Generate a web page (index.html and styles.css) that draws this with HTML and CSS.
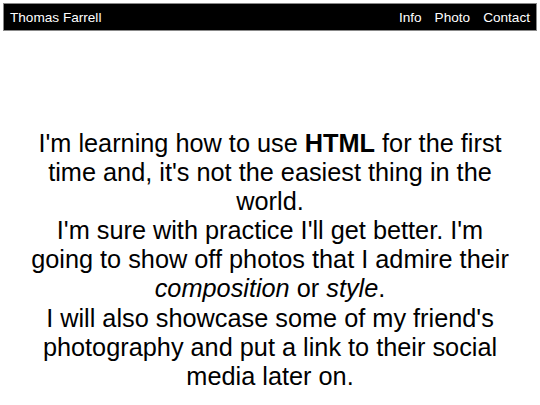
FILE: index.html
```html
<!DOCTYPE html>
<html>
<head>
<meta charset="utf-8">
<title>Thomas Farrell</title>
<link rel="stylesheet" href="styles.css">
</head>
<body>
<nav class="nav">
  <span class="brand">Thomas Farrell</span>
  <ul class="links">
    <li><a href="#">Info</a></li>
    <li><a href="#">Photo</a></li>
    <li><a href="#">Contact</a></li>
  </ul>
</nav>
<main class="intro">
  <p>I'm learning how to use <strong>HTML</strong> for the first time and, it's not the easiest thing in the world.<br>I'm sure with practice I'll get better. I'm going to show off photos that I admire their <em>composition</em> or <em>style</em>.<br>I will also showcase some of my friend's photography and put a link to their social media later on.</p>
</main>
</body>
</html>
```
FILE: styles.css
```css
html, body {
  margin: 0;
  padding: 0;
  background: #fff;
}
body {
  padding: 3px;
  font-family: "Liberation Sans", Arial, sans-serif;
  color: #000;
}
.nav {
  display: flex;
  justify-content: space-between;
  align-items: center;
  background: #000;
  border: 1px solid #888;
  height: 26px;
  padding: 0 6px;
  color: #fff;
  font-size: 13.6px;
}
.links {
  display: flex;
  gap: 13px;
  list-style: none;
  margin: 0;
  padding: 0;
}
.links a {
  color: #fff;
  text-decoration: none;
}
.intro {
  padding: 0 24px;
  margin-top: 98px;
}
.intro p {
  margin: 0;
  text-align: center;
  font-size: 25.3px;
  line-height: 29.1px;
}
```
